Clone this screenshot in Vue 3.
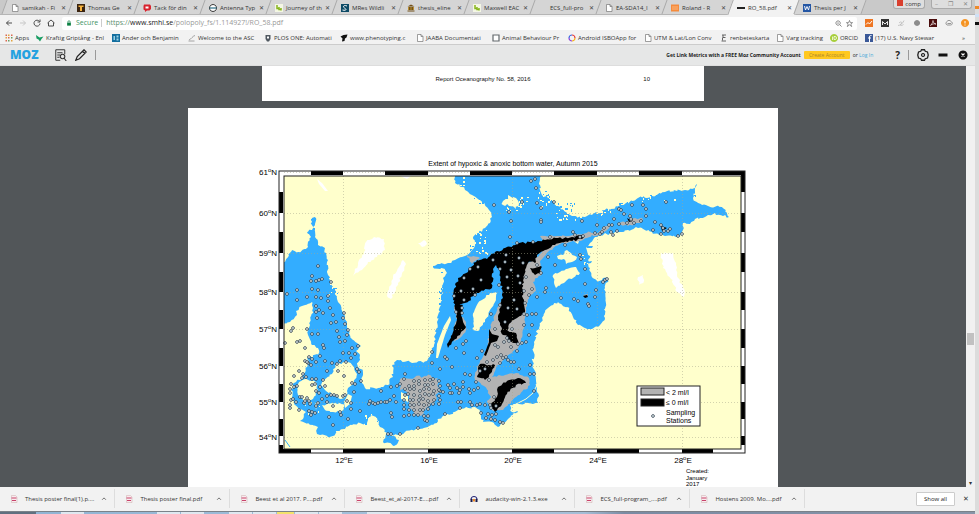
<template>
  <div class="desktop">
    <div class="browser">
      <!-- Tabs -->
      <header class="tab-strip">
        <nav class="tabs">
          <div v-for="tab in tabs" :key="tab.title" class="tab" :class="{ active: tab.active }">
            <Glyph :name="tab.icon" class="tab-icon" />
            <span class="tab-title">{{ tab.title }}</span>
            <button type="button" class="tab-close" aria-label="Close tab">✕</button>
          </div>
        </nav>
        <div class="window-controls">
          <span class="recorder"><i></i>comp</span>
          <span class="window-buttons">
            <button type="button" aria-label="Minimize">–</button>
            <button type="button" aria-label="Restore">❐</button>
            <button type="button" aria-label="Close">✕</button>
          </span>
        </div>
      </header>

      <!-- Address bar -->
      <div class="toolbar">
        <div class="nav-buttons">
          <button v-for="n in navButtons" :key="n" type="button" class="icon-btn" :aria-label="n">
            <Glyph :name="n" class="nav-icon" :class="{ faded: n === 'forward' }" />
          </button>
        </div>
        <div class="omnibox">
          <Glyph name="lock" class="lock-icon" />
          <span class="secure">Secure</span>
          <span class="bar"></span>
          <span class="url">https://<b>www.smhi.se</b><em>/polopoly_fs/1.114927!/RO_58.pdf</em></span>
          <span class="omnibox-end">
            <Glyph name="zoom" class="small-icon" />
            <Glyph name="star" class="small-icon" />
          </span>
        </div>
        <div class="extensions">
          <button v-for="e in extensions" :key="e" type="button" class="icon-btn" :aria-label="e">
            <Glyph :name="e" class="ext-icon" />
          </button>
        </div>
      </div>

      <!-- Bookmarks -->
      <nav class="bookmarks">
        <a v-for="b in bookmarks" :key="b.title" href="#" class="bookmark" :class="{ wide: b.wide }">
          <Glyph :name="b.icon" class="bookmark-icon" />
          <span class="bookmark-title">{{ b.title }}</span>
        </a>
        <span class="more">»</span>
      </nav>

      <!-- MozBar -->
      <div class="mozbar">
        <span class="moz-logo">MOZ</span>
        <button type="button" class="icon-btn" aria-label="Page analysis"><Glyph name="analysis" class="moz-icon" /></button>
        <button type="button" class="icon-btn" aria-label="Highlight"><Glyph name="pencil" class="moz-icon" /></button>
        <span class="moz-line"></span>
        <div class="moz-promo">
          <strong>Get Link Metrics with a FREE Moz Community Account</strong>
          <button type="button" class="create-btn">Create Account</button>
          <span>or <a href="#">Log In</a></span>
        </div>
        <div class="moz-actions">
          <button type="button" class="help-btn">?</button>
          <span class="moz-line"></span>
          <button type="button" class="icon-btn" aria-label="Settings"><Glyph name="gear" class="moz-icon" /></button>
          <button type="button" class="icon-btn" aria-label="Minimize bar"><Glyph name="dash" class="moz-icon" /></button>
          <button type="button" class="icon-btn" aria-label="Close bar"><Glyph name="closeRound" class="moz-icon" /></button>
        </div>
      </div>

      <!-- PDF viewer -->
      <main class="viewer">
        <div class="pages">
          <section class="page page-prev">
            <span></span>
            <span>Report Oceanography No. 58, 2016</span>
            <span class="page-no">10</span>
          </section>
          <section class="page page-map">
            <svg class="map" viewBox="188 108 590 390">
              <defs>
                <clipPath id="sea-frame"><rect x="284" y="176" width="457" height="273" /></clipPath>
              </defs>
              <rect x="279" y="171" width="466" height="282" class="frame-outer" />
              <rect x="284" y="176" width="457" height="273" class="land" />
              <g clip-path="url(#sea-frame)">
                <path v-for="(d, i) in lakes" :key="'l' + i" :d="d" class="lake" />
                <path :d="sea" class="sea" />
                <path v-for="(d, i) in inlets" :key="'n' + i" :d="d" class="sea" />
                <rect v-for="(s, i) in coves" :key="'c' + i" :x="s.x" :y="s.y" :width="s.w" :height="s.h" class="sea" />
                <rect v-for="(s, i) in skerries" :key="'s' + i" :x="s.x" :y="s.y" :width="s.w" :height="s.h" class="land" />
                <path v-for="(d, i) in hypoxic" :key="'h' + i" :d="d" class="hypoxic" />
                <path v-for="(d, i) in anoxic" :key="'a' + i" :d="d" class="anoxic" />
                <path v-for="(d, i) in islands" :key="'i' + i" :d="d" class="land" />
                <path d="M536 375 L537 385 L533 393 L526 399 L516 404" class="spit" />
                <path d="M285 440 L290 447" class="river" />
              </g>
              <g class="grid">
                <line v-for="m in meridians" :key="m.label" :x1="m.x" :x2="m.x" y1="176" y2="449" />
                <line v-for="p in parallels" :key="p.label" x1="284" x2="741" :y1="p.y" :y2="p.y" />
              </g>
              <g class="station">
                <circle v-for="(s, i) in stations" :key="i" :cx="s[0]" :cy="s[1]" r="1.4" />
              </g>
              <g class="frame-ticks">
                <rect v-for="(t, i) in ticks" :key="i" :x="t.x" :y="t.y" :width="t.w" :height="t.h" />
              </g>
              <rect x="284" y="176" width="457" height="273" class="frame-line" />
              <rect x="279" y="171" width="466" height="282" class="frame-line" />

              <text x="513" y="166" class="map-title">Extent of hypoxic &amp; anoxic bottom water, Autumn 2015</text>
              <text v-for="p in parallels" :key="p.label" x="277" :y="p.y + 3" class="lat">{{ p.label }}<tspan dy="-3" class="deg">o</tspan><tspan dy="3">N</tspan></text>
              <text v-for="m in meridians" :key="m.label" :x="m.x + 1" y="463" class="lon">{{ m.label }}<tspan dy="-3" class="deg">o</tspan><tspan dy="3">E</tspan></text>

              <!-- Legend -->
              <rect x="637" y="386" width="63" height="40" class="legend" />
              <rect x="641" y="388" width="23" height="7" class="legend-key hypoxic" />
              <rect x="641" y="399" width="23" height="7" class="legend-key" />
              <circle cx="653" cy="416" r="1.4" class="legend-dot" />
              <text x="666" y="395" class="legend-text">&lt; 2 ml/l</text>
              <text x="666" y="405" class="legend-text">≤ 0 ml/l</text>
              <text x="666" y="415" class="legend-text">Sampling</text>
              <text x="666" y="423" class="legend-text">Stations</text>

              <text x="686" y="473" class="created">Created:</text>
              <text x="686" y="480" class="created">January</text>
              <text x="686" y="486" class="created">2017</text>
            </svg>
          </section>
        </div>
        <div class="scrollbar">
          <span class="space-above"></span>
          <span class="thumb"></span>
          <span class="space-below"></span>
          <span class="arrow">▾</span>
        </div>
      </main>

      <!-- Downloads -->
      <footer class="downloads">
        <div v-for="d in downloads" :key="d.name" class="download">
          <Glyph :name="d.icon" class="file-icon" />
          <span class="file-name">{{ d.name }}</span>
          <button type="button" class="icon-btn" aria-label="Options"><Glyph name="chevron" class="chevron" /></button>
        </div>
        <div class="downloads-end">
          <button type="button" class="show-all">Show all</button>
          <button type="button" class="close-shelf" aria-label="Close downloads">✕</button>
        </div>
      </footer>
      <div class="taskbar">
        <span class="start"></span>
        <span v-for="(t, i) in taskItems" :key="i" class="task" :class="t"></span>
      </div>
    </div>
    <aside class="edge"><i class="orange"></i><i class="blue"></i><i class="dark"></i></aside>
  </div>
</template>

<script setup>
import { h } from 'vue'

// shape: [path, fill, stroke, stroke width]
const glyphs = {
  none: [],
  page: [['M3 1h7l4 4v10H3z M10 1v4h4', '#fff', '#777', 1.4]],
  thomas: [['M0 0h16v16H0z', '#3b2410'], ['M3 3h10v3H10v8H6V6H3z', '#f6b23c']],
  bubble: [['M2 1h12l2 3v6l-3 3H8l-4 3v-3l-3-2V4z', '#d8232e'], ['M5 5h6v4H5z', '#fff']],
  ring: [['M8 1a7 7 0 1 0 .1 0z', '#fff', '#222', 1.8], ['M1 8h14', 'none', '#2a6f86', 2.4]],
  leaf: [['M0 0h16v16H0z', '#f4f7e4'], ['M4 2v7h4M8 6v5h4M12 8v5', 'none', '#86b51d', 3]],
  swirl: [['M0 0h16v16H0z', '#0d4a66'], ['M12 4C5 1 3 6 7 8s5 6-4 4', 'none', '#fff', 2]],
  temple: [['M1 5l7-4 7 4z M1 13h14v2H1z', '#735018'], ['M2 6h12v6H2z', '#b98e33'], ['M5 6v6M8 6v6M11 6v6', 'none', '#56390c', 1.4]],
  roland: [['M0 1h16v14H0z', '#f58b3c'], ['M2 6h12M2 10h12', 'none', '#ffc391', 1.6]],
  smhi: [['M0 6h16v4H0z', '#222']],
  word: [['M0 0h16v16H0z', '#2456a4'], ['M3 4l2 8 3-7 3 7 2-8', 'none', '#fff', 1.8]],
  apps: [['M1 1h3v3H1z M1 12h3v3H1z M6 6h3v3H6z M12 1h3v3h-3z', '#d9694f'], ['M6 1h3v3H6z M1 6h3v3H1z M12 12h3v3h-3z', '#e2a23a'], ['M12 6h3v3h-3z M6 12h3v3H6z', '#6a9c63']],
  bird: [['M0 2l7 5 8-2-4 5-3 5-3-4-4-2z', '#189c62']],
  blueSquare: [['M0 0h16v16H0z', '#146f9f'], ['M3 4h3v8H3z M9 3h4v4H9z M9 9h4v4H9z', '#9bd3e8']],
  curve: [['M1 14h12M2 12C7 10 9 4 14 3', 'none', '#888', 1.5]],
  plos: [['M3 2h10v8l-3 5H6l-3-5z', '#505860'], ['M6 5h4v4H6z', '#fff']],
  phenotype: [['M1 5l6-3 8-1-2 6-3 2-1 5-5 1 1-6z', '#111']],
  frame: [['M2 2h12v12H2z', '#fff', '#63696d', 2.4]],
  rainbow: [['M8 2a6 6 0 0 1 6 6', 'none', '#e53d3d', 2.4], ['M14 8a6 6 0 0 1-6 6', 'none', '#f5b21b', 2.4], ['M8 14a6 6 0 0 1-6-6', 'none', '#8f46d8', 2.4], ['M2 8a6 6 0 0 1 6-6', 'none', '#3a64e0', 2.4]],
  reindeer: [['M4 2h8M6 2v5h5M5 7v6M3 14h9', 'none', '#555', 1.8]],
  orcid: [['M8 0a8 8 0 1 0 .1 0z', '#a6ce39'], ['M5 5v7M8 5h2a3 3 0 0 1 0 6H8z', 'none', '#fff', 1.5]],
  facebook: [['M0 0h16v16H0z', '#3b5998'], ['M13 3h-2q-2 0-2 3v10M6 8h6', 'none', '#fff', 2]],
  back: [['M14 8H3M8 3L3 8l5 5', 'none', '#444', 1.9]],
  forward: [['M2 8h11M8 3l5 5-5 5', 'none', '#444', 1.9]],
  reload: [['M13 5a6 6 0 1 0 1 4M14 1v5H9', 'none', '#444', 1.9]],
  home: [['M1 8l7-6 7 6M3 7v7h10V7', 'none', '#444', 1.9]],
  lock: [['M3 7h10v8H3z', '#0b8043'], ['M5 7V5a3 3 0 0 1 6 0v2', 'none', '#0b8043', 1.8]],
  zoom: [['M7 2a5 5 0 1 0 .1 0zM11 11l4 4M5 7h4', 'none', '#555', 1.5]],
  star: [['M8 1l2 5h5l-4 3 2 6-5-4-5 4 2-6-4-3h5z', 'none', '#555', 1.4]],
  analytics: [['M0 0h16v16H0z', '#ee7623'], ['M2 11l4-4 3 3 5-6', 'none', '#fff', 2]],
  mozExtension: [['M0 0h16v16H0z', '#333'], ['M3 12V5l5 5 5-5v7', 'none', '#fff', 1.8]],
  sketch: [['M2 13c5 0 10-5 12-10M4 8c4-4 7-2 4 2s1 4 5 1', 'none', '#b5b5b5', 1.5]],
  dot: [['M8 2a6 6 0 1 0 .1 0z', '#8c8c8c']],
  acrobat: [['M0 0h16v16H0z', '#4b0d0d'], ['M3 13C7 9 8 4 8 3c0 4 3 7 6 7-4-1-8 0-11 3z', 'none', '#fff', 1.3]],
  cloud: [['M4 12a4 4 0 0 1 0-7c2-3 6-3 8 0 4 2 3 7-1 7zM5 9h7', 'none', '#777', 1.5]],
  orangeDot: [['M8 0a8 8 0 1 0 .1 0z', '#f59322'], ['M8 4v5M8 11v2', 'none', '#fff', 2]],
  analysis: [['M13 7V1H1v14h6M3 5h7M3 8h4M3 11h3', 'none', '#333', 1.3], ['M10 7a3 3 0 1 0 .1 0zM12 12l3 4', 'none', '#333', 1.5]],
  pencil: [['M1 15l2-5L12 1l3 3-9 9zM10 3l3 3', 'none', '#222', 1.6]],
  gear: [['M6 1h4l1 2 3 1 1 4-1 4-3 1-1 2H6l-1-2-3-1-1-4 1-4 3-1z', 'none', '#222', 1.7], ['M8 6a2 2 0 1 0 .1 0z', 'none', '#222', 1.6]],
  dash: [['M2 6h12v4H2z', '#111']],
  closeRound: [['M8 2a6 6 0 1 0 .1 0z', '#111'], ['M6 6l4 4M10 6l-4 4', 'none', '#fff', 1.5]],
  pdf: [['M3 1h8l3 3v11H3z', '#f8ecef', '#caa', 1], ['M3 5h10v2H3zM4 10h8v2H4z', '#c9426b']],
  audacity: [['M2 9a6 6 0 0 1 12 0', 'none', '#2c2c7c', 2.4], ['M1 8h4v6H1zM11 8h4v6h-4z', '#1b1b48'], ['M6 8h4v5H6z', '#f08a24']],
  chevron: [['M3 10l5-5 5 5', 'none', '#555', 2.2]],
}

const Glyph = ({ name }) =>
  h('svg', { viewBox: '0 0 16 16', 'aria-hidden': 'true' },
    glyphs[name].map(([d, fill, stroke, width]) =>
      h('path', { d, fill, stroke: stroke || 'none', 'stroke-width': width || 0 })))
Glyph.props = ['name']

const tabs = [
  { title: 'samikah - Fi', icon: 'page' },
  { title: 'Thomas Ge', icon: 'thomas' },
  { title: 'Tack för din', icon: 'bubble' },
  { title: 'Antenna Typ', icon: 'ring' },
  { title: 'Journey of th', icon: 'leaf' },
  { title: 'MRes Wildli', icon: 'swirl' },
  { title: 'thesis_eline', icon: 'temple' },
  { title: 'Maxwell EAC', icon: 'leaf' },
  { title: 'ECS_full-pro', icon: 'none' },
  { title: 'EA-SDA14_I', icon: 'page' },
  { title: 'Roland - R', icon: 'roland' },
  { title: 'RO_58.pdf', icon: 'smhi', active: true },
  { title: 'Thesis per J', icon: 'word' },
]

const navButtons = ['back', 'forward', 'reload', 'home']
const extensions = ['analytics', 'mozExtension', 'sketch', 'dot', 'acrobat', 'cloud', 'orangeDot']

const bookmarks = [
  { title: 'Apps', icon: 'apps' },
  { title: 'Kraftig Griptång - Enl', icon: 'bird', wide: true },
  { title: 'Ander och Benjamin', icon: 'blueSquare', wide: true },
  { title: 'Welcome to the ASC', icon: 'curve', wide: true },
  { title: 'PLOS ONE: Automati', icon: 'plos', wide: true },
  { title: 'www.phenotyping.c', icon: 'phenotype', wide: true },
  { title: 'JAABA Documentati', icon: 'page', wide: true },
  { title: 'Animal Behaviour Pr', icon: 'frame', wide: true },
  { title: 'Android ISBOApp for', icon: 'rainbow', wide: true },
  { title: 'UTM & Lat/Lon Conv', icon: 'page', wide: true },
  { title: 'renbeteskarta', icon: 'reindeer' },
  { title: 'Varg tracking', icon: 'page' },
  { title: 'ORCID', icon: 'orcid' },
  { title: '(17) U.S. Navy Stewar', icon: 'facebook', wide: true },
]

const downloads = [
  { name: 'Thesis poster final(1).p....', icon: 'pdf' },
  { name: 'Thesis poster final.pdf', icon: 'pdf' },
  { name: 'Beest et al 2017. P....pdf', icon: 'pdf' },
  { name: 'Beest_et_al-2017-E....pdf', icon: 'pdf' },
  { name: 'audacity-win-2.1.3.exe', icon: 'audacity' },
  { name: 'ECS_full-program_....pdf', icon: 'pdf' },
  { name: 'Hostens 2009. Mo....pdf', icon: 'pdf' },
]

const taskItems = ['', 'light', '', '', '', 'light', 'light', '', 'light', 'light', 'yellow', 'light', 'light', '', 'light']

// small seeded generator, keeps the coastline the same on every load
let seed = 7
function rand() {
  seed = (seed * 16807) % 2147483647
  return seed / 2147483647
}

// turn a list of coordinates into a closed path with a ragged edge
function shape(text, rough = 1) {
  const pts = text.trim().split(/\s+/).map(p => p.split(',').map(Number))
  const out = []
  pts.forEach(([x, y], i) => {
    const [nx, ny] = pts[(i + 1) % pts.length]
    out.push([x, y])
    const steps = Math.floor(Math.hypot(nx - x, ny - y) / 2)
    for (let s = 1; s < steps; s++) {
      const t = s / steps
      out.push([
        x + (nx - x) * t + (rand() - 0.5) * 2 * rough,
        y + (ny - y) * t + (rand() - 0.5) * 2 * rough,
      ])
    }
  })
  return 'M' + out.map(([x, y]) => x.toFixed(1) + ' ' + y.toFixed(1)).join('L') + 'Z'
}

const sea = shape(`
  454,170 455,183 462,187 465,190 472,195 480,200 485,205 489,210 492,217 490,223 485,228 478,233 473,237
  475,243 472,250 467,255 462,257 455,260 448,263 433,266 433,267 445,269 447,273 443,278 443,288 442,298
  441,305 437,322 435,335 434,345 430,355 427,361 412,363 397,360 392,365 393,377 388,385 380,388 365,388
  362,383 363,373 358,367 360,355 356,351 361,346 357,343 350,337 347,325 343,313 338,302 333,287 328,275
  327,262 325,248 318,245 315,237 313,227 316,218 312,218 312,230 308,232 311,237 308,247 298,252 292,250
  285,262 280,264 280,323 290,322 297,315 296,311 302,306 312,302 313,308 310,325 308,335 312,345 318,348
  318,355 308,357 307,367 302,377 294,383 291,390 293,400 298,408 306,412 303,419 300,421 308,423 318,427
  317,434 320,435 330,437 340,430 352,425 360,423 367,423 372,415 377,418 380,427 387,433 383,442 394,446
  399,440 390,435 398,435 405,432 418,428 433,425 442,417 458,410 475,407 480,410 483,422 492,422 498,427
  508,419 518,412 512,412 510,405 528,403 538,403 539,396 537,388 535,375 533,362 534,342 540,325 545,312
  548,308 558,302 567,307 573,317 578,325 585,328 592,329 600,325 605,318 605,288 608,279 603,278 598,282
  592,277 590,268 588,260 590,256 586,248 590,243 595,237 615,232 628,230 638,228 652,232 665,236 678,237
  682,232 683,223 690,224 695,219 705,217 715,213 723,216 729,217 722,207 708,206 702,205 693,198 695,188
  697,184 692,189 685,190 665,192 652,196 638,198 622,205 605,210 592,215 585,217 572,216 558,206 550,200
  542,195 540,185 540,170`, 1.4)

const inlets = [
  'M307 232l5-1 1 2-5 1z',
  'M433 266l8 1v1l-7 0z',
  'M587 246h6l-1 2h-5z',
  'M586 262l6-1-1 2-5 1z',
]

const lakes = [
  shape('366,242 374,237 384,239 385,250 377,257 368,262 362,270 353,276 358,263 364,254'),
  shape('403,260 406,264 397,286 391,299 387,296 393,277'),
  shape('418,243 424,240 427,244 422,247'),
  shape('317,179 322,183 328,191 325,191 319,184', 0),
  shape('400,176 411,176 407,179', 0),
  shape('661,253 673,253 676,265 677,276 684,289 684,297 677,292 671,279 663,268'),
  shape('638,277 643,275 644,281 639,285'),
]

const islands = [
  shape('503,201 508,196 516,198 519,203 516,209 509,206 503,205', 2),
  shape('490,293 497,293 495,302 490,310 485,322 478,331 473,330 474,312 478,303'),
  shape('450,316 451,320 445,335 438,358 436,358 437,344 444,326', 0),
  shape('557,256 563,255 567,250 571,253 577,257 572,262 566,264 564,259 558,259'),
  shape('553,275 560,272 566,269 576,267 580,273 573,278 567,280 561,284 556,288 554,282'),
  shape('298,384 305,379 316,382 318,390 313,399 305,401 298,395'),
  shape('324,380 332,374 337,364 348,362 354,367 357,374 354,383 348,388 347,395 341,399 334,395 326,391 321,385'),
  shape('322,405 332,403 344,404 342,411 333,412 325,410'),
  shape('348,394 352,396 350,404 345,408 344,402', 0),
  shape('401,392 408,396 408,402 401,399', 0),
  shape('315,404 318,401 316,410', 0),
  shape('368,421 371,415 376,417 379,424 372,427'),
  shape('575,242 579,241 578,244', 0),
]

const hypoxic = [
  shape('400,380 415,377 428,375 438,379 439,392 434,402 426,408 421,416 413,411 409,402 407,392 400,388', 2),
  shape('497,308 520,268 530,262 540,254 546,243 540,236 553,236 575,235 590,232 594,234 583,240 560,244 548,252 540,262 542,274 533,282 536,291 529,296 527,306 524,328 521,345 510,354 496,368 492,377 505,375 516,373 529,378 530,385 516,397 503,410 492,410 487,401 491,397 484,386 475,380 477,367 487,348 490,330', 1),
  shape('589,235 598,233 602,228 612,224 606,231 596,236', 1),
  shape('617,223 627,222 635,218 643,219 640,223 628,226', 1),
  shape('467,255 480,258 472,264', 1),
  shape('454,305 459,313 466,322 466,330 460,338 454,342 453,333 457,319', 1),
  shape('583,295 588,294 587,298', 0),
]

const anoxic = [
  shape(`455,309 453,295 458,278 468,272 477,260 487,259 495,252 505,248 517,244 532,242 545,240 558,238
    572,237 583,235 582,239 568,242 555,245 545,250 537,255 536,262 528,263 525,270 522,288 524,305 525,312
    517,318 509,324 508,335 503,335 500,325 498,316 500,308 503,298 501,282 499,269 496,265 493,269 492,288 478,293 465,303`, 1.2),
  shape('530,268 541,266 541,272 535,275', 1),
  shape('455,305 463,305 461,315 466,327 460,335 453,341 448,348 447,344 453,332 457,318', 1),
  shape('489,329 492,334 499,336 497,341 491,343 486,356 484,355 489,342', 0),
  shape('480,364 495,365 491,373 485,380 477,377', 1),
  shape('505,330 516,333 519,344 514,343 506,338', 1),
  shape('525,381 518,378 507,381 498,387 497,397 491,404 495,412 502,404 507,394 516,385 526,383', 1),
  shape('627,218 632,221 629,222', 0),
  shape('583,296 587,295 588,297 585,298', 0),
  shape('661,226 667,228 662,231', 0),
]

// scattered cells in [x, y, width, height, count]
function scatter(areas) {
  return areas.flatMap(([x, y, w, hgt, n]) =>
    Array.from({ length: n }, () => ({
      x: Math.round(x + rand() * w),
      y: Math.round(y + rand() * hgt),
      w: 1 + Math.floor(rand() * 2),
      h: 1 + Math.floor(rand() * 2),
    })))
}

const skerries = scatter([
  [474, 228, 14, 26, 22], [506, 197, 22, 14, 20], [538, 192, 18, 14, 26], [556, 205, 30, 14, 30],
  [456, 176, 8, 9, 4], [594, 208, 26, 6, 10], [328, 274, 8, 26, 10], [640, 196, 36, 5, 6],
  [580, 255, 8, 14, 6], [364, 412, 14, 12, 8], [300, 400, 22, 14, 8],
])
const coves = scatter([
  [540, 190, 10, 10, 10], [556, 202, 18, 12, 18], [330, 280, 6, 22, 14], [472, 198, 12, 8, 6],
  [439, 270, 5, 36, 12], [612, 202, 24, 5, 10], [310, 216, 4, 14, 4], [360, 415, 18, 8, 10],
  [470, 244, 6, 12, 10], [640, 194, 40, 2, 12], [689, 190, 6, 6, 6],
])

function pairs(text) {
  return text.trim().split(/\s+/).map(p => p.split(',').map(Number))
}

const stations = pairs(`
  318,266 312,276 311,281 316,281 319,280 322,279 331,282 297,290 312,289 318,290 287,294 297,300 307,297
  316,297 321,298 328,296 328,301 316,306 319,310 323,313 330,308 344,313 316,312 317,318 333,315 336,322
  331,323 343,318 345,324 348,330 347,335 337,331 307,329 312,334 318,334 340,342 345,341 293,328 291,331
  285,343 297,342 300,341 305,348 323,345 324,348 339,337 343,353 349,353 352,348 358,346 355,354 351,358
  320,356 325,361 309,357 305,361 308,363 312,359 316,362 311,365 307,362 332,363 337,364 340,361 338,371
  327,371 344,376 357,369 359,372 355,384 352,383 346,362 361,381 299,371 303,374 294,376 302,378 306,377
  312,379 316,379 315,384 320,387 323,380 325,386 312,385 291,384 290,389 290,393 294,387 297,386 291,400
  290,405 290,408 293,399 296,402 300,397 302,397 304,403 307,398 309,401 305,401 310,404 316,391 319,393
  322,399 327,396 331,395 334,395 337,396 327,402 299,410 309,411 312,412 315,413 311,415 316,406 318,403
  333,406 340,412 341,415 329,417 333,425 348,419 351,409 360,411 351,403 343,396 347,401 354,392 345,395
  370,401 369,404 373,403 375,404 378,403 381,402 385,402 387,402 390,400 394,396 396,402 391,413 392,417
  388,434 391,434 400,434 381,391 391,387 397,386 404,379 405,374 400,384 418,428 425,420 427,421
  480,371 477,358 482,351 493,360 497,357 500,363 503,358 506,357 508,360 511,362 514,362 487,362
  495,345 498,347 504,342 507,338 511,347 518,344 522,343 526,342 529,335 524,325 532,325 524,314 532,314
  536,314 527,315 491,314 495,329 517,351 519,369 530,365 534,374 534,391 530,374 501,355 485,369 489,380
  476,382 478,388 477,405 472,405 480,404 485,405 494,397 490,405 491,408 496,406 481,413 486,418 488,414
  492,415 496,414 491,419 495,420 500,422 503,423 445,414 460,408 458,402 461,402 470,402 448,385 450,388
  452,393 454,384 457,388 460,390 463,387 463,382 469,389 470,393 474,390 450,393 440,391 443,392 459,393
  465,374 470,375 445,357 440,369 432,363 452,367 447,359 456,348 464,353 463,344 466,341 432,352
  494,205 509,212 511,221 510,237 522,202 531,181 535,179 536,188 537,203 541,208 541,220 541,222 554,202
  582,221 573,232 575,235 580,237 583,236 565,245 533,242 550,237 517,243 506,255 493,260 500,269 519,258
  523,263 541,273 548,257 555,265 537,265 546,288 545,292 537,297 532,289 529,295 525,303 561,298 574,299
  578,301 585,284 580,255 581,259 585,269 588,304 526,277 518,276 507,277 508,288 499,285 524,291 470,269
  464,278 481,280 454,296 464,300 473,289 461,291 478,267 475,295 500,305 508,308 505,262 511,270 514,300
  597,225 600,234 604,228 602,232 595,233 609,225 612,225 614,219 617,231 613,235 611,232 619,209 621,210
  624,214 619,224 627,223 630,216 631,220 634,223 631,219 643,205 646,209 646,216 641,221 632,205 666,202
  655,222 661,225 663,228 664,231 661,234 668,231 670,229 653,230 678,236 682,234 605,280 607,279 603,282
  596,290 595,297 589,306 456,312 462,313 462,308 520,283 512,329 505,322 517,309 509,341`)

// dense survey grid over the Bornholm basin
for (let row = 0; row < 8; row++) {
  for (let col = 0; col < 8; col++) {
    if (row + col < 2 || (row > 5 && col > 5)) continue
    stations.push([403 + col * 5 + Math.round(rand() * 2), 379 + row * 5 + Math.round(rand() * 2)])
  }
}

const meridians = [
  { label: '12', x: 343 },
  { label: '16', x: 428 },
  { label: '20', x: 512 },
  { label: '24', x: 597 },
  { label: '28', x: 682 },
]
const parallels = [
  { label: '61', y: 172 },
  { label: '60', y: 213 },
  { label: '59', y: 253 },
  { label: '58', y: 292 },
  { label: '57', y: 329 },
  { label: '56', y: 366 },
  { label: '55', y: 402 },
  { label: '54', y: 437 },
]

// alternating scale bars along the frame
const xs = [279, 311, 343, 385, 428, 470, 512, 554, 597, 639, 682, 713, 745]
const ys = [171, 192, 213, 232, 253, 272, 292, 310, 329, 348, 366, 384, 402, 419, 436, 445, 453]
const ticks = []
xs.slice(1).forEach((x, i) => {
  ticks.push({ x: xs[i], y: i % 2 ? 171 : 449, w: x - xs[i], h: 4 })
})
ys.slice(1).forEach((y, i) => {
  ticks.push({ x: i % 2 ? 279 : 741, y: ys[i], w: 4, h: y - ys[i] })
})
</script>

<style>
body {
  margin: 0;
}
</style>

<style scoped>
.desktop {
  display: flex;
  height: 100vh;
  overflow: hidden;
  background: #f2f2f2;
  font-family: 'Open Sans', 'Noto Sans', sans-serif;
  font-size: 6px;
  line-height: 10px;
  color: #333;
}

.browser {
  flex: 1;
  min-width: 0;
  display: flex;
  flex-direction: column;
}

button {
  font: inherit;
  color: inherit;
  border: none;
  background: none;
  padding: 0;
}

a {
  color: inherit;
  text-decoration: none;
}

svg {
  display: block;
  flex-shrink: 0;
}

.icon-btn {
  display: flex;
}

/* ── TABS ── */
.tab-strip {
  display: flex;
  justify-content: space-between;
  height: 15px;
  background: #c9c9c9;
  border-bottom: 1px solid #b5b5b5;
  box-sizing: border-box;
}

.tabs {
  display: flex;
  padding-left: 5px;
}

.tab {
  width: 66px;
  height: 15px;
  display: flex;
  align-items: center;
  gap: 3px;
  padding: 0 5px 0 6px;
  box-sizing: border-box;
  position: relative;
  z-index: 0;
}

.tab::before {
  content: '';
  position: absolute;
  inset: 0 -1px 1px;
  z-index: -1;
  background: #d5d5d5;
  border: 1px solid #a9a9a9;
  border-width: 0 1px;
  transform: skewX(-20deg);
}

.tab.active::before {
  background: #f2f2f2;
  bottom: 0;
}

.tab-icon {
  width: 8px;
  height: 8px;
}

.tab-title {
  flex: 1;
  min-width: 0;
  white-space: nowrap;
}

.tab-close {
  color: #444;
}

.window-controls {
  display: flex;
  gap: 6px;
  height: 9px;
  line-height: 8px;
}

.recorder,
.window-buttons {
  display: flex;
  gap: 2px;
  padding: 0 3px;
  background: #dedede;
  border: 1px solid #aaa;
  border-top: none;
  border-radius: 0 0 3px 3px;
}

.recorder i {
  width: 6px;
  height: 6px;
  background: #d9402f;
}

.window-buttons {
  gap: 10px;
  margin-right: 3px;
  color: #888;
}

/* ── ADDRESS BAR ── */
.toolbar {
  display: flex;
  align-items: center;
  height: 16px;
  padding: 0 6px 0 5px;
  background: #f2f2f2;
}

.nav-buttons {
  display: flex;
  gap: 6px;
  width: 57px;
}

.nav-icon {
  width: 8px;
  height: 8px;
}

.faded {
  opacity: 0.25;
}

.omnibox {
  flex: 1;
  display: flex;
  align-items: center;
  height: 13px;
  padding: 0 4px;
  background: #fff;
  border-radius: 2px;
  font-size: 7px;
}

.lock-icon {
  width: 6px;
  height: 6px;
  margin-right: 4px;
}

.secure {
  color: #3d9465;
}

.bar {
  width: 1px;
  height: 8px;
  margin: 0 4px 0 3px;
  background: #ccc;
}

.url {
  color: #5c8f70;
}

.url b {
  font-weight: 400;
  color: #222;
}

.url em {
  font-style: normal;
  color: #999;
}

.omnibox-end {
  display: flex;
  gap: 4px;
  margin-left: auto;
}

.small-icon {
  width: 7px;
  height: 7px;
}

.extensions {
  display: flex;
  gap: 8px;
  margin-left: 8px;
}

.ext-icon {
  width: 8px;
  height: 8px;
}

/* ── BOOKMARKS ── */
.bookmarks {
  display: flex;
  align-items: center;
  height: 13px;
  padding: 0 10px 0 5px;
  gap: 7px;
  background: #f2f2f2;
  border-bottom: 1px solid #ccc;
}

.bookmark {
  display: flex;
  align-items: center;
  gap: 2px;
  white-space: nowrap;
}

.bookmark.wide {
  width: 69px;
}

.bookmark-icon {
  width: 8px;
  height: 8px;
}

.more {
  margin-left: auto;
}

/* ── MOZBAR ── */
.mozbar {
  display: flex;
  align-items: center;
  height: 20px;
  padding: 0 6px 0 10px;
  background: #e6e7e7;
  border-bottom: 1px solid #ddd;
}

.moz-logo {
  width: 45px;
  font-size: 12px;
  font-weight: 800;
  color: #24a1e0;
}

.moz-icon {
  width: 12px;
  height: 12px;
  margin-right: 8px;
}

.moz-line {
  width: 1px;
  height: 10px;
  background: #999;
}

.moz-promo {
  display: flex;
  align-items: center;
  gap: 3px;
  margin-left: auto;
  font-size: 5px;
  color: #222;
}

.moz-promo a {
  color: #4aa9d8;
}

.create-btn {
  width: 46px;
  height: 8px;
  line-height: 8px;
  border-radius: 1px;
  background: #ffc81f;
  color: #a8842b;
}

.moz-actions {
  display: flex;
  align-items: center;
  gap: 8px;
  margin-left: 22px;
}

.moz-actions .moz-icon {
  margin-right: 0;
}

.help-btn {
  font-size: 10px;
  font-weight: 700;
  color: #222;
}

/* ── VIEWER ── */
.viewer {
  flex: 1;
  min-height: 0;
  display: flex;
}

.pages {
  flex: 1;
  display: flex;
  flex-direction: column;
  align-items: center;
  gap: 7px;
  overflow: hidden;
  background: #525659;
}

.page {
  flex-shrink: 0;
  max-width: 100%;
  background: #fff;
}

.page-prev {
  width: 442px;
  height: 35px;
  display: grid;
  grid-template-columns: 1fr auto 1fr;
  padding-top: 8px;
  box-sizing: border-box;
  font-family: 'Liberation Sans', Arial, sans-serif;
  color: #111;
}

.page-no {
  justify-self: end;
  margin-right: 54px;
}

.page-map {
  width: 590px;
}

.map {
  width: 100%;
  font-family: 'Liberation Sans', Arial, sans-serif;
  font-size: 8px;
}

.land {
  fill: #ffffcc;
}

.sea {
  fill: #33adff;
}

.lake,
.frame-outer,
.legend {
  fill: #fff;
}

.hypoxic {
  fill: #b3b3b3;
}

.anoxic,
.frame-ticks,
.legend-key {
  fill: #000;
}

.legend-key.hypoxic {
  fill: #b3b3b3;
}

.spit {
  fill: none;
  stroke: #ffffcc;
}

.river {
  stroke: #33adff;
}

.grid {
  stroke: #a8a88c;
  stroke-opacity: 0.5;
  stroke-dasharray: 1 2;
  shape-rendering: crispEdges;
}

.station,
.legend-dot {
  fill: #f4ffff;
  stroke: #102030;
  stroke-width: 0.7;
}

.frame-line {
  fill: none;
  stroke: #222;
}

.legend,
.legend-key {
  stroke: #222;
}

.map-title,
.lon {
  text-anchor: middle;
}

.map-title,
.legend-text {
  font-size: 7px;
}

.lat {
  text-anchor: end;
}

.deg,
.created {
  font-size: 6px;
}

.scrollbar {
  width: 9px;
  display: flex;
  flex-direction: column;
  align-items: center;
  background: #f1f1f1;
}

.space-above {
  flex: 2;
}

.thumb {
  width: 7px;
  height: 12px;
  background: #c1c1c1;
}

.space-below {
  flex: 1;
}

.arrow {
  line-height: 8px;
}

/* ── DOWNLOADS ── */
.downloads {
  display: flex;
  height: 24px;
  background: #f2f2f2;
}

.download {
  flex: 0 1 115px;
  display: flex;
  align-items: center;
  gap: 7px;
  margin: 2px 0 3px;
  padding: 0 7px 0 10px;
  box-sizing: border-box;
  border-right: 1px solid #ddd;
}

.file-icon {
  width: 8px;
  height: 8px;
}

.file-name {
  flex: 1;
  white-space: nowrap;
}

.chevron {
  width: 6px;
  height: 6px;
}

.downloads-end {
  display: flex;
  align-items: center;
  gap: 8px;
  margin-left: auto;
  padding-right: 6px;
}

.show-all {
  width: 39px;
  height: 14px;
  background: #fff;
  border: 1px solid #ccc;
  border-radius: 1px;
  color: #222;
}

.close-shelf {
  font-size: 7px;
}

.taskbar {
  display: flex;
  gap: 1px;
  height: 3px;
  background: linear-gradient(90deg, #8fb3d3, #a9c3dc 50%, #a4bdd6 60%, #7a8ba3 64%, #8794a8);
  border-top: 1px solid #7b8289;
  box-sizing: border-box;
}

.start {
  width: 36px;
  background: #607080;
}

.task {
  width: 23px;
}

.light {
  background: #dfe8f0;
}

.yellow {
  width: 17px;
  background: #f3e26b;
}

/* ── WINDOW EDGE ── */
.edge {
  width: 4px;
  display: flex;
  flex-direction: column;
  gap: 5px;
  padding-top: 6px;
  box-sizing: border-box;
  background: #dcdcdc;
}

.edge i {
  height: 3px;
}

.orange {
  background: #ee8a2c;
}

.blue {
  background: #cfe0f5;
}

.dark {
  background: #111;
}
</style>
